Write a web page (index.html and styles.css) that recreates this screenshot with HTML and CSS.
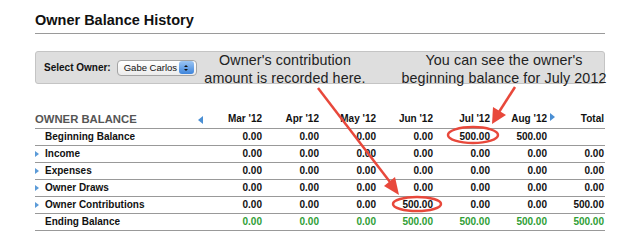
FILE: index.html
```html
<!DOCTYPE html>
<html lang="en">
<head>
    <meta charset="UTF-8">
    <title>Owner Balance History</title>
    <link rel="stylesheet" href="styles.css">
</head>
<body>
    <div class="page">
        <h1 class="title">Owner Balance History</h1>

        <div class="filter">
            <span class="filter-label">Select Owner:</span>
            <div class="select">
                <span class="select-value">Gabe Carlos</span>
                <span class="stepper"><span class="up"></span><span class="down"></span></span>
            </div>
        </div>

        <table class="balance">
            <thead>
                <tr>
                    <th class="name">OWNER BALANCE <span class="nav prev"></span></th>
                    <th>Mar '12</th>
                    <th>Apr '12</th>
                    <th>May '12</th>
                    <th>Jun '12</th>
                    <th>Jul '12</th>
                    <th>Aug '12</th>
                    <th class="nav-cell"><span class="nav next"></span></th>
                    <th class="total">Total</th>
                </tr>
            </thead>
            <tbody>
                <tr>
                    <td class="name"><span class="toggle none"></span>Beginning Balance</td>
                    <td>0.00</td><td>0.00</td><td>0.00</td><td>0.00</td><td>500.00</td><td>500.00</td>
                    <td class="nav-cell"></td><td class="total"></td>
                </tr>
                <tr>
                    <td class="name"><span class="toggle"></span>Income</td>
                    <td>0.00</td><td>0.00</td><td>0.00</td><td>0.00</td><td>0.00</td><td>0.00</td>
                    <td class="nav-cell"></td><td class="total">0.00</td>
                </tr>
                <tr>
                    <td class="name"><span class="toggle"></span>Expenses</td>
                    <td>0.00</td><td>0.00</td><td>0.00</td><td>0.00</td><td>0.00</td><td>0.00</td>
                    <td class="nav-cell"></td><td class="total">0.00</td>
                </tr>
                <tr>
                    <td class="name"><span class="toggle"></span>Owner Draws</td>
                    <td>0.00</td><td>0.00</td><td>0.00</td><td>0.00</td><td>0.00</td><td>0.00</td>
                    <td class="nav-cell"></td><td class="total">0.00</td>
                </tr>
                <tr>
                    <td class="name"><span class="toggle"></span>Owner Contributions</td>
                    <td>0.00</td><td>0.00</td><td>0.00</td><td>500.00</td><td>0.00</td><td>0.00</td>
                    <td class="nav-cell"></td><td class="total">500.00</td>
                </tr>
                <tr class="ending">
                    <td class="name"><span class="toggle none"></span>Ending Balance</td>
                    <td>0.00</td><td>0.00</td><td>0.00</td><td>500.00</td><td>500.00</td><td>500.00</td>
                    <td class="nav-cell"></td><td class="total">500.00</td>
                </tr>
            </tbody>
        </table>
    </div>

    <div class="callout callout-left">Owner's contribution<br>amount is recorded here.</div>
    <div class="callout callout-right">You can see the owner's<br>beginning balance for July 2012</div>

    <svg class="marks" width="638" height="246" viewBox="0 0 638 246">
        <g fill="none" stroke="#e8483b" stroke-width="2.5">
            <line x1="318" y1="88" x2="390" y2="182"/>
            <line x1="515" y1="87" x2="499" y2="112"/>
            <ellipse cx="417" cy="204" rx="24" ry="7"/>
            <ellipse cx="473" cy="135" rx="25" ry="8"/>
        </g>
        <g fill="#e8483b">
            <polygon points="399,195 384,186 395,177"/>
            <polygon points="492,124 493,107 506,115"/>
        </g>
    </svg>
</body>
</html>
```

FILE: styles.css
```css
* {
    box-sizing: border-box;
}

body {
    margin: 0;
    background: #fff;
    color: #111;
    font-family: "Liberation Sans", Arial, Helvetica, sans-serif;
}

.page {
    width: 570px;
    margin-left: 35px;
}

.title {
    margin: 11px 0 0;
    padding-bottom: 4px;
    line-height: 18px;
    font-size: 14.5px;
    font-weight: bold;
    border-bottom: 1px solid #9a9a9a;
}

.filter {
    display: flex;
    align-items: center;
    gap: 6px;
    height: 33px;
    margin-top: 17px;
    padding-left: 8px;
    background: #dedede;
    border: 1px solid #c4c4c4;
    border-radius: 3px;
}

.filter-label {
    font-size: 10px;
    font-weight: bold;
}

.select {
    display: flex;
    align-items: center;
    width: 80px;
    height: 16px;
    padding-right: 2px;
    border: 1px solid #a4a4a4;
    border-radius: 4px;
    background: linear-gradient(#ffffff, #ececec);
}

.select-value {
    flex: 1;
    padding-left: 6px;
    font-size: 9.5px;
    white-space: nowrap;
}

.stepper {
    display: flex;
    flex-direction: column;
    align-items: center;
    justify-content: center;
    gap: 2px;
    width: 15px;
    height: 13px;
    border-radius: 3px;
    background: linear-gradient(#9cc6f4, #3d84db);
}

.stepper .up,
.stepper .down {
    width: 0;
    height: 0;
    border-left: 2px solid transparent;
    border-right: 2px solid transparent;
}

.stepper .up {
    border-bottom: 2.5px solid #111;
}

.stepper .down {
    border-top: 2.5px solid #111;
}

.balance {
    width: 570px;
    margin-top: 25px;
    border-collapse: collapse;
    table-layout: fixed;
    font-size: 10px;
}

.balance th,
.balance td {
    height: 17px;
    padding: 0;
    text-align: right;
    font-weight: bold;
    white-space: nowrap;
    border-bottom: 1px solid #999;
}

.balance thead th {
    height: 19px;
    padding-top: 1px;
}

.balance th.name {
    width: 170px;
    text-align: left;
    color: #555;
    font-size: 11.3px;
}

.balance th:nth-child(n+2):nth-child(-n+7) {
    width: 57px;
}

.balance .nav-cell {
    width: 11px;
    text-align: left;
}

.balance .total {
    width: 47px;
    padding-right: 1px;
}

.balance td.name {
    text-align: left;
}

.nav {
    display: inline-block;
    width: 0;
    height: 0;
    border-top: 4px solid transparent;
    border-bottom: 4px solid transparent;
    vertical-align: 1px;
}

.nav.prev {
    float: right;
    margin: 3px 2px 0 0;
    border-right: 5px solid #4a8fd4;
}

.nav.next {
    margin-left: 3px;
    border-left: 5px solid #4a8fd4;
}

.toggle {
    display: inline-block;
    width: 0;
    height: 0;
    margin-right: 6px;
    border-top: 3.5px solid transparent;
    border-bottom: 3.5px solid transparent;
    border-left: 4px solid #5b9bd8;
    vertical-align: 0;
}

.toggle.none {
    border-left-color: transparent;
}

.ending td:not(.name) {
    color: #2f9e36;
}

.callout {
    position: absolute;
    font-size: 14.3px;
    line-height: 18px;
    color: #222;
    text-align: center;
    letter-spacing: 0.1px;
}

.callout-left {
    top: 51px;
    left: 175px;
    width: 220px;
}

.callout-right {
    top: 51px;
    left: 384px;
    width: 240px;
}

.marks {
    position: absolute;
    top: 0;
    left: 0;
    pointer-events: none;
}
```
